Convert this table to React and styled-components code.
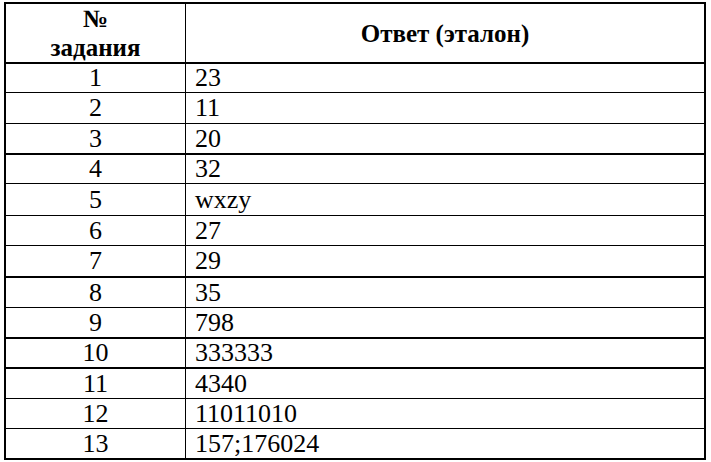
import React from 'react';
import styled, { createGlobalStyle } from 'styled-components';

const GlobalStyle = createGlobalStyle`
  html, body {
    margin: 0;
    padding: 0;
    background: #fff;
  }
  body {
    font-family: "Liberation Serif", "Times New Roman", serif;
    color: #000;
  }
`;

const Page = styled.div`
  padding: 2px 0 0 4px;
  width: 711px;
  height: 462px;
  box-sizing: border-box;
`;

const Table = styled.div`
  width: 702px;
  border: 2px solid #000;
  box-sizing: border-box;
  display: flex;
  flex-direction: column;
`;

const Row = styled.div`
  display: grid;
  grid-template-columns: 179px 1px 1fr;
  height: ${(p) => p.$h}px;
  border-bottom: ${(p) => (p.$last ? 0 : p.$thick ? 2 : 1)}px solid #000;
`;

const Divider = styled.div`
  background: #000;
`;

const HeadCell = styled.div`
  display: flex;
  flex-direction: column;
  align-items: center;
  justify-content: center;
  font-weight: bold;
  font-size: 25px;
  line-height: 29px;
  text-align: center;
`;

const Cell = styled.div`
  display: flex;
  align-items: center;
  justify-content: ${(p) => (p.$center ? 'center' : 'flex-start')};
  padding-left: ${(p) => (p.$center ? 0 : 9)}px;
  font-size: 26px;
  line-height: 1;
  white-space: nowrap;
`;

const rows = [
  { n: 1, a: '23', h: 28 },
  { n: 2, a: '11', h: 30 },
  { n: 3, a: '20', h: 29, thick: true },
  { n: 4, a: '32', h: 28 },
  { n: 5, a: 'wxzy', h: 31 },
  { n: 6, a: '27', h: 29 },
  { n: 7, a: '29', h: 30, thick: true },
  { n: 8, a: '35', h: 29 },
  { n: 9, a: '798', h: 29, thick: true },
  { n: 10, a: '333333', h: 28, thick: true },
  { n: 11, a: '4340', h: 29 },
  { n: 12, a: '11011010', h: 29 },
  { n: 13, a: '157;176024', h: 29 },
];

export default function App() {
  return (
    <>
      <GlobalStyle />
      <Page>
        <Table>
          <Row $h={58} $thick>
            <HeadCell>
              <span>№</span>
              <span>задания</span>
            </HeadCell>
            <Divider />
            <HeadCell>Ответ (эталон)</HeadCell>
          </Row>
          {rows.map((r, i) => (
            <Row key={r.n} $h={r.h} $thick={r.thick} $last={i === rows.length - 1}>
              <Cell $center>{r.n}</Cell>
              <Divider />
              <Cell>{r.a}</Cell>
            </Row>
          ))}
        </Table>
      </Page>
    </>
  );
}
